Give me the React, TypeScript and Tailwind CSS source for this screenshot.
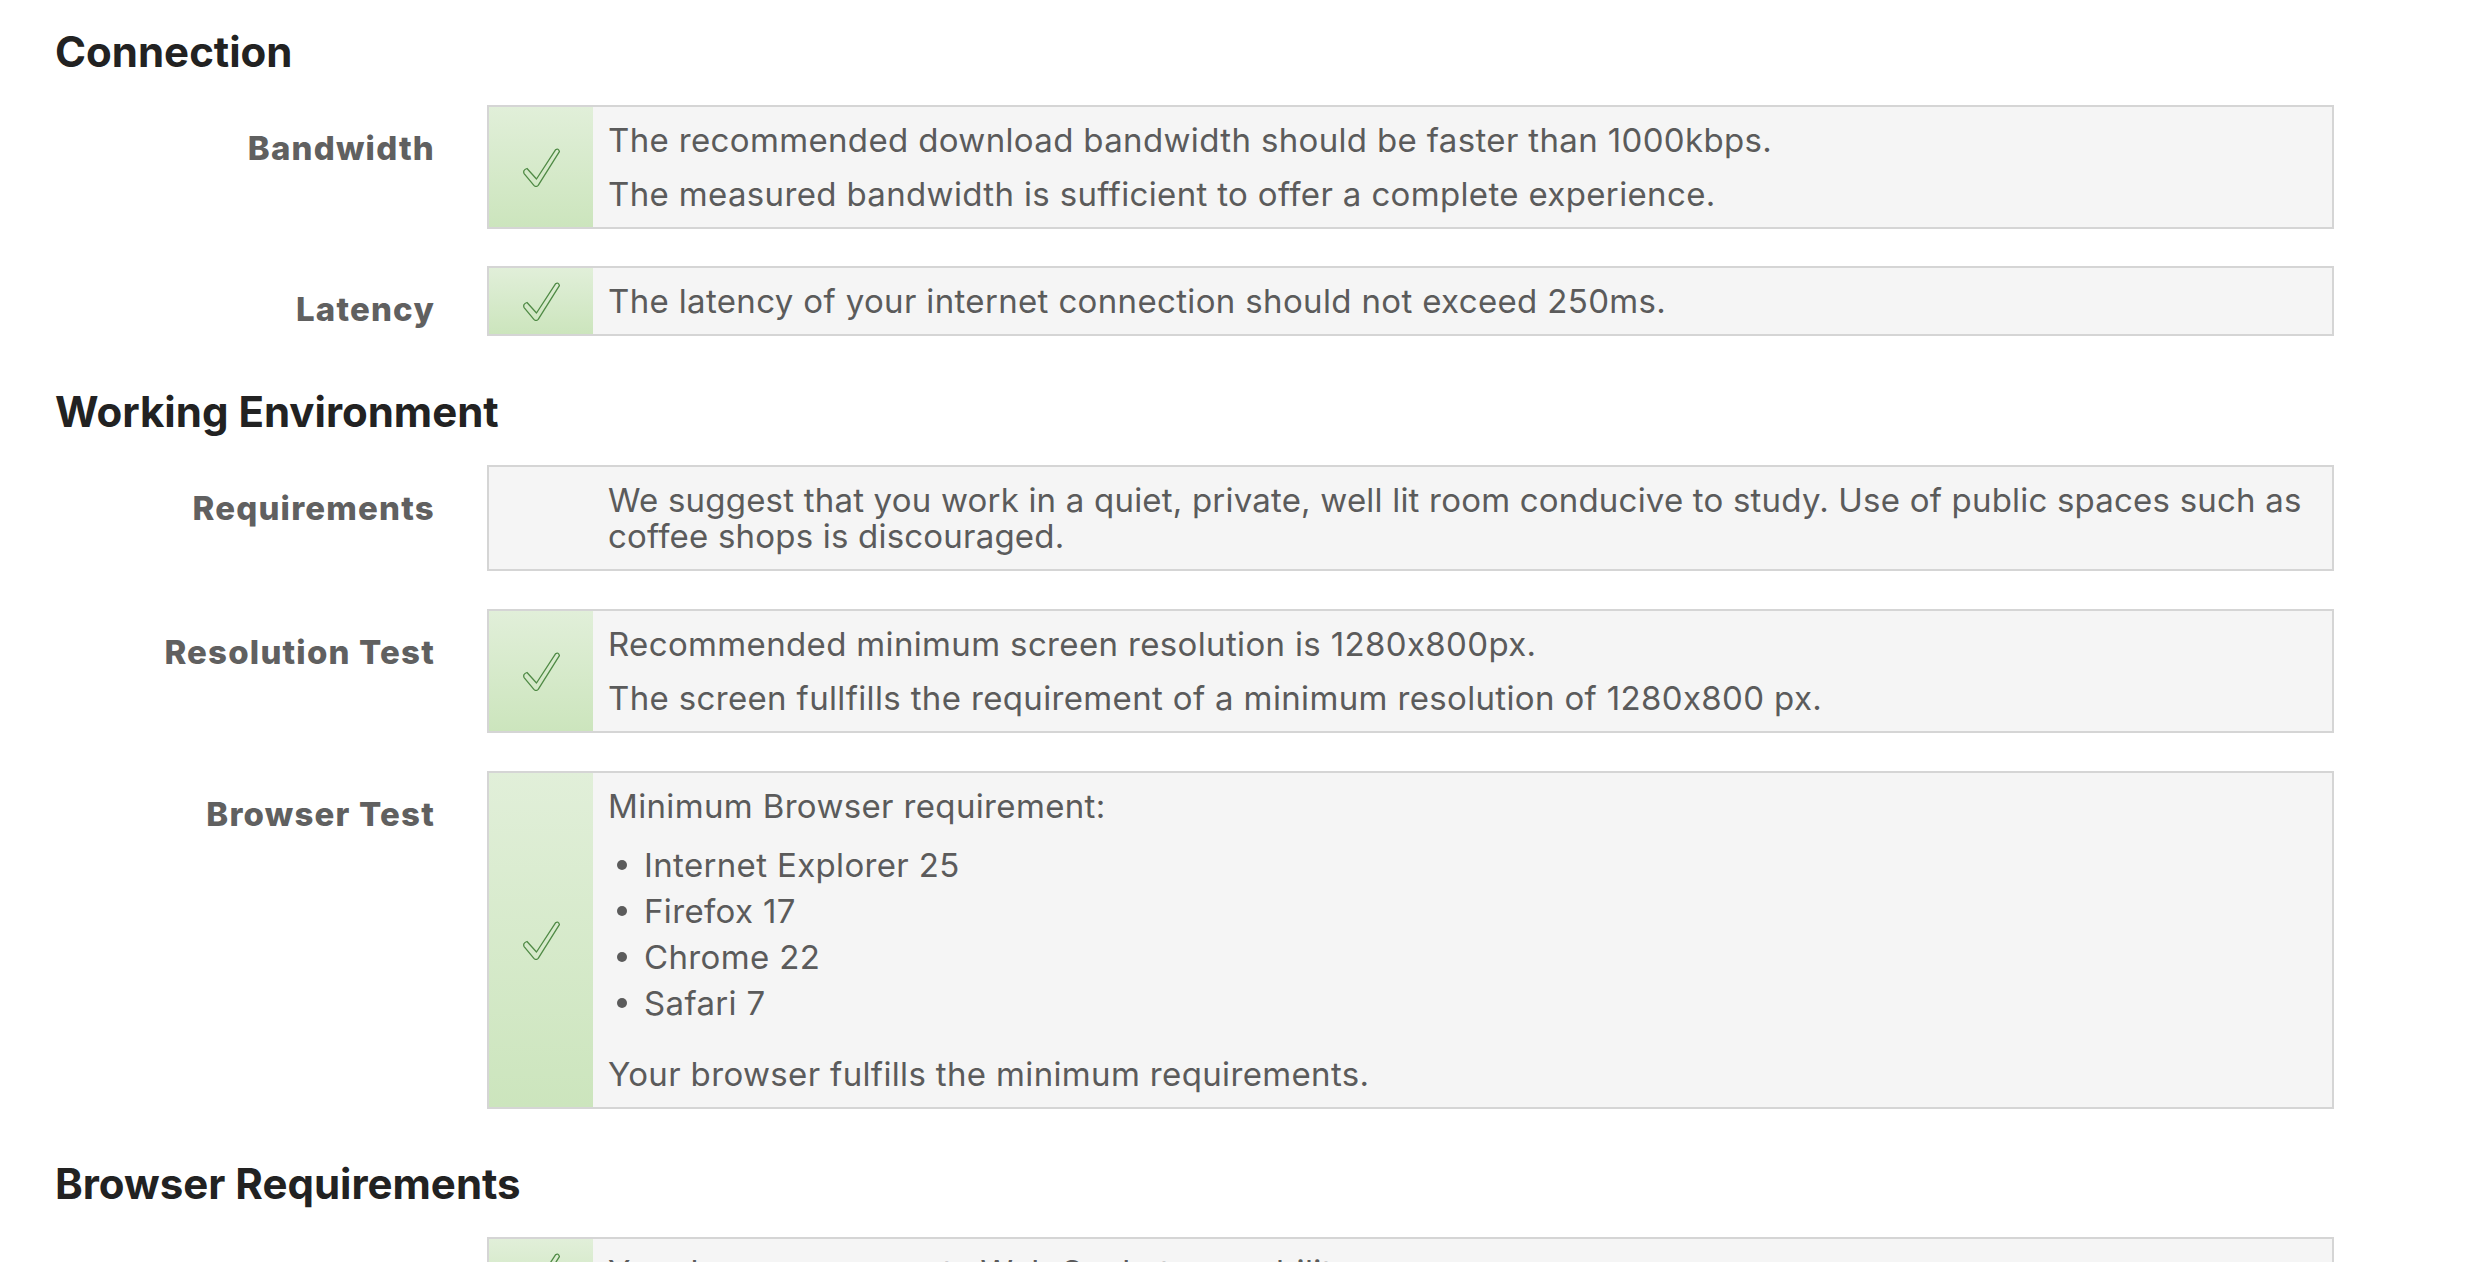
import type { ReactNode } from "react";

type RowProps = {
  label: string;
  ok?: boolean;
  children: ReactNode;
};

const Check = () => (
  <svg width="37" height="39" viewBox="0 0 37 39" fill="none">
    <path
      d="M4 20.5 L13.5 31 L32.5 1.8 Q35.5 -0.2 36.4 3.6 L15.2 37.4 Q13 39.6 10.9 37.4 L1.1 25.6 Q-0.4 22 4 20.5 Z"
      stroke="#4f8a45"
      strokeWidth="1.3"
      strokeLinejoin="round"
    />
  </svg>
);

const Row = ({ label, ok = true, children }: RowProps) => {
  return (
    <div className="flex">
      {/* label column */}
      <div className="w-[380px] shrink-0 pt-[25px] text-right text-[33px] leading-[36px] font-extrabold tracking-[1.2px] text-[#606060]">
        {label}
      </div>

      <div className="ml-[52px] flex flex-1 border-2 border-[#d5d5d5] bg-[#f5f5f5]">
        <div
          className={
            ok
              ? "flex w-[104px] shrink-0 items-center justify-center bg-gradient-to-b from-[#e1efd9] to-[#cce5bd]"
              : "w-[104px] shrink-0"
          }
        >
          {ok && <Check />}
        </div>
        <div className="flex flex-1 flex-col gap-[18px] py-[15px] pl-[15px] pr-[8px] text-[33px] leading-[36px] tracking-[0.35px] text-[#5b5b5b]">
          {children}
        </div>
      </div>
    </div>
  );
};

const Heading = ({ children }: { children: ReactNode }) => (
  <h2 className="mb-[29px] text-[42px] leading-[48px] font-bold text-[#222222]">{children}</h2>
);

export default function App() {
  return (
    <div className="min-h-screen bg-white pt-[28px] pl-[55px] pr-[150px] font-['Inter','Liberation_Sans',sans-serif] [font-feature-settings:'calt'_0]">
      {/* Connection */}
      <Heading>Connection</Heading>
      <div className="flex flex-col gap-[37px]">
        <Row label="Bandwidth">
          <p>The recommended download bandwidth should be faster than 1000kbps.</p>
          <p>The measured bandwidth is sufficient to offer a complete experience.</p>
        </Row>
        <Row label="Latency">
          <p>The latency of your internet connection should not exceed 250ms.</p>
        </Row>
      </div>

      {/* Working environment */}
      <div className="mt-[52px]">
        <Heading>Working Environment</Heading>
      </div>
      <div className="flex flex-col gap-[38px]">
        <Row label="Requirements" ok={false}>
          <p className="tracking-[0.2px]">
            We suggest that you work in a quiet, private, well lit room conducive to study. Use of public
            spaces such as coffee shops is discouraged.
          </p>
        </Row>
        <Row label="Resolution Test">
          <p>Recommended minimum screen resolution is 1280x800px.</p>
          <p>The screen fullfills the requirement of a minimum resolution of 1280x800 px.</p>
        </Row>
        <Row label="Browser Test">
          <p>Minimum Browser requirement:</p>
          <ul className="mb-[12px]">
            {["Internet Explorer 25", "Firefox 17", "Chrome 22", "Safari 7"].map((b) => (
              <li key={b} className="flex items-center leading-[46px]">
                <span className="ml-[9px] mr-[17px] h-[10px] w-[10px] rounded-full bg-[#5b5b5b]" />
                {b}
              </li>
            ))}
          </ul>
          <p>Your browser fulfills the minimum requirements.</p>
        </Row>
      </div>

      {/* Browser requirements */}
      <div className="mt-[51px]">
        <Heading>Browser Requirements</Heading>
      </div>
      <div className="flex flex-col gap-[38px] pb-[40px]">
        <Row label="Web Sockets">
          <p>Your browser supports Web Sockets capability.</p>
        </Row>
      </div>
    </div>
  );
}
